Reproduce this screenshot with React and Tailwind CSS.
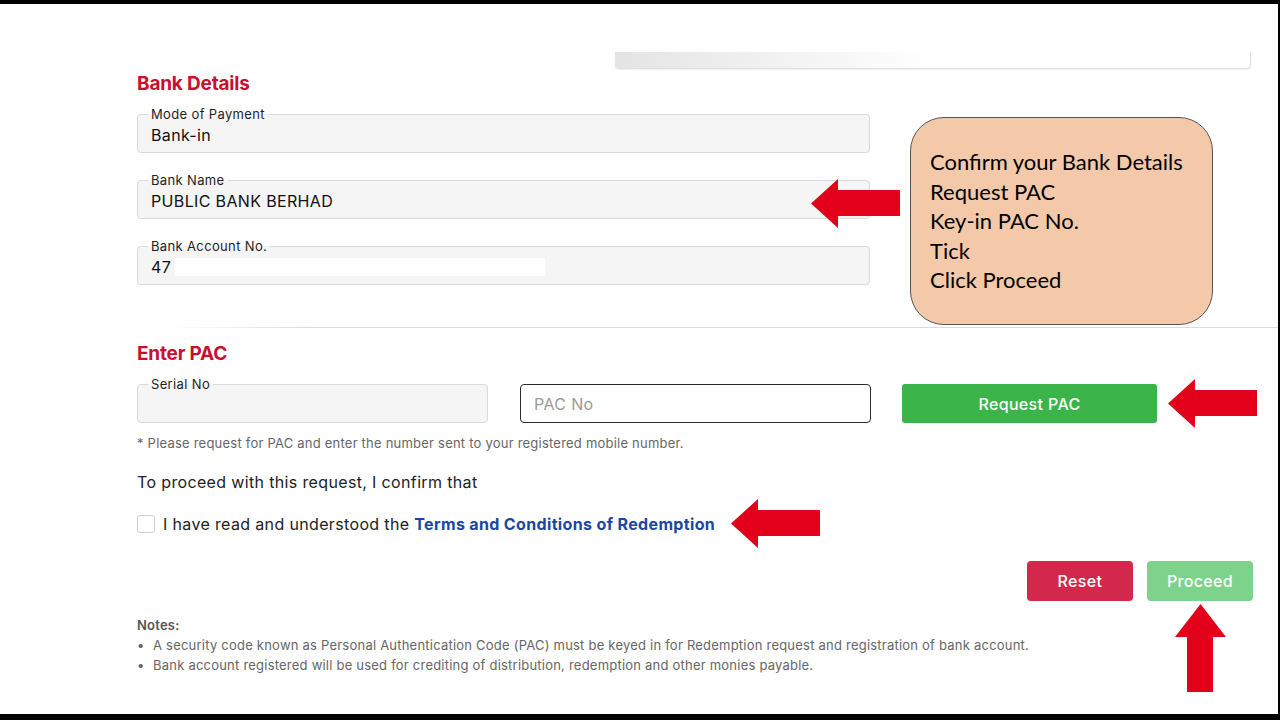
import React from 'react';

const font = { fontFamily: 'Inter, "Liberation Sans", Arial, sans-serif' };

const LeftArrow = ({ className }) => (
  <svg className={className} width="89" height="49" viewBox="0 0 89 49">
    <polygon points="0,24.5 27,0 27,11 89,11 89,37 27,37 27,49" fill="#e2001a" />
  </svg>
);

const UpArrow = ({ className }) => (
  <svg className={className} width="51" height="88" viewBox="0 0 51 88">
    <polygon points="25.5,0 51,33 38,33 38,88 12,88 12,33 0,33" fill="#e2001a" />
  </svg>
);

// Read-only field with the label sitting on the top border
const Field = ({ label, value, className = '', children }) => (
  <fieldset
    className={`m-0 min-w-0 rounded-[4px] border border-[#dadada] bg-[#f5f5f5] px-[13px] pb-[7px] ${className}`}
  >
    <legend className="ml-[-3px] px-[3px] text-[13px] leading-[16px] text-[#1f1f1f]">
      {label}
    </legend>
    <div className="box-content h-[20px] pt-[3px] text-[16px] leading-[20px] text-[#111]">
      {value}
      {children}
    </div>
  </fieldset>
);

export default function App() {
  return (
    <div
      className="relative h-[720px] w-[1280px] overflow-hidden border-t-4 border-b-[6px] border-r-2 border-black bg-white tracking-[0.022em]"
      style={font}
    >
      {/* tail of the card above */}
      <div className="ml-[615px] mt-[48px] h-[17px] w-[636px] rounded-b-[4px] border-b border-r border-[#dedede] bg-linear-to-r from-[#e4e4e4] via-white to-white shadow-[0_1px_2px_rgba(0,0,0,0.06)]" />

      <div className="pl-[137px]">
        <h2 className="mt-[3px] text-[19px] font-bold leading-[24px] tracking-[-0.01em] text-[#c8102e]">Bank Details</h2>

        <div className="mt-[10px] flex w-[733px] flex-col gap-[19px]">
          <Field label="Mode of Payment" value="Bank-in" />
          <Field label="Bank Name" value="PUBLIC BANK BERHAD" />
          <Field label="Bank Account No.">
            <span className="flex items-center">
              47
              <span className="ml-[4px] inline-block h-[18px] w-[370px] bg-white" />
            </span>
          </Field>
        </div>

        <div className="mt-[42px] h-px w-[1143px] bg-linear-to-r from-white from-[3%] to-[#dcdcdc] to-[15%]" />

        <h2 className="mt-[14px] text-[19px] font-bold leading-[24px] tracking-[-0.01em] text-[#c8102e]">Enter PAC</h2>

        <div className="mt-[10px] flex items-end">
          <Field label="Serial No" value="" className="w-[351px]" />
          <div className="ml-[32px] flex h-[39px] w-[351px] items-center rounded-[4px] border border-[#2b2b2b] bg-white px-[13px] text-[16px] text-[#9a9a9a]">
            PAC No
          </div>
          <button className="ml-[31px] h-[39px] w-[255px] rounded-[3px] bg-[#3bb54a] text-[16px] font-medium text-white">
            Request PAC
          </button>
        </div>

        <p className="mt-[12px] text-[13px] leading-[16px] tracking-[0.017em] text-[#666]">
          * Please request for PAC and enter the number sent to your registered mobile number.
        </p>

        <p className="mt-[21px] text-[16px] leading-[20px] text-[#222]">
          To proceed with this request, I confirm that
        </p>

        <label className="mt-[22px] flex items-center text-[16px] leading-[20px] text-[#222]">
          <span className="mr-[8px] inline-block h-[18px] w-[18px] rounded-[3px] border border-[#cfcfcf] bg-white" />
          I have read and understood the&nbsp;
          <span className="font-bold text-[#1b47a1]">Terms and Conditions of Redemption</span>
        </label>

        <div className="mt-[27px] flex w-[1116px] justify-end gap-[14px]">
          <button className="h-[40px] w-[106px] rounded-[4px] bg-[#d1284b] text-[16px] font-medium text-white">Reset</button>
          <button className="h-[40px] w-[106px] rounded-[4px] bg-[#7dd38b] text-[16px] font-medium text-white">Proceed</button>
        </div>

        <div className="mt-[16px] text-[13px] tracking-[0.017em] text-[#666]">
          <p className="font-semibold leading-[16px] text-[#555]">Notes:</p>
          <ul className="mt-[2px] leading-[20px]">
            <li className="flex">
              <span className="w-[16px]">•</span>
              A security code known as Personal Authentication Code (PAC) must be keyed in for Redemption request and registration of bank account.
            </li>
            <li className="flex">
              <span className="w-[16px]">•</span>
              Bank account registered will be used for crediting of distribution, redemption and other monies payable.
            </li>
          </ul>
        </div>
      </div>

      {/* tutorial overlay */}
      <div
        className="absolute left-[910px] top-[113px] flex h-[208px] w-[303px] flex-col justify-center rounded-[34px] border-[1.5px] border-[#555] bg-[#f3c9aa] pl-[19px] text-[22px] leading-[29.5px] tracking-normal text-black"
        style={{ fontFamily: 'Lato, "Open Sans", sans-serif' }}
      >
        <div>Confirm your Bank Details</div>
        <div>Request PAC</div>
        <div>Key-in PAC No.</div>
        <div>Tick</div>
        <div>Click Proceed</div>
      </div>
      <LeftArrow className="absolute left-[811px] top-[175px]" />
      <LeftArrow className="absolute left-[1168px] top-[375px]" />
      <LeftArrow className="absolute left-[731px] top-[495px]" />
      <UpArrow className="absolute left-[1175px] top-[600px]" />
    </div>
  );
}
